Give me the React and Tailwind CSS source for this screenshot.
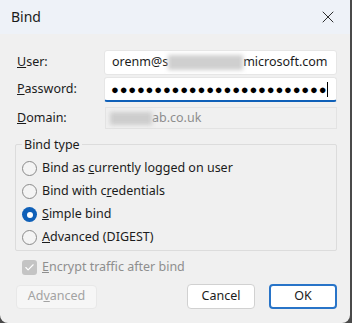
import { X, Check } from "lucide-react";

const font = { fontFamily: '"Noto Sans", "Open Sans", sans-serif' };

function Radio({ checked, children }) {
  return (
    <div className="flex items-center h-[23px]">
      {checked ? (
        <span className="w-[15px] h-[15px] rounded-full bg-[#0f60b8] flex items-center justify-center">
          <span className="w-[6px] h-[6px] rounded-full bg-white" />
        </span>
      ) : (
        <span className="w-[15px] h-[15px] rounded-full border border-[#8a8a8a] bg-[#f4f4f4]" />
      )}
      <span className="ml-[5px] text-[#1b1b1b]">{children}</span>
    </div>
  );
}

export default function App() {
  return (
    <div className="w-[352px] h-[323px] bg-[#4a4a4a] text-[12.5px] leading-none" style={font}>
      <div className="w-[350px] h-[323px] bg-[#f0f0f0] rounded-b-[8px] overflow-hidden flex flex-col">
        <div className="h-[34px] bg-[#eef2f8] flex items-center justify-between pl-[11px] pr-[12px]">
          <span className="text-[14px] text-[#1b1b1b]">Bind</span>
          <X size={20} strokeWidth={1.1} className="text-[#1b1b1b]" />
        </div>

        <div className="flex flex-col pl-[17px] pr-[13px] pt-[16px]">
          <div className="flex items-center h-[25px]">
            <span className="w-[87px] text-[#1b1b1b]"><u>U</u>ser:</span>
            <div className="flex-1 h-[25px] bg-white border border-[#e6e6e6] rounded-[3px] flex items-center pl-[7px] text-[#1b1b1b]">
              orenm@s
              <span className="inline-block w-[75px] h-[15px] bg-[#cfcfcf] blur-[2px]" />
              microsoft.com
            </div>
          </div>

          <div className="flex items-center h-[25px] mt-[2px]">
            <span className="w-[87px] text-[#1b1b1b]"><u>P</u>assword:</span>
            <div className="flex-1 h-[25px] bg-white border border-[#e6e6e6] border-b-2 border-b-[#0f60b8] rounded-[3px] flex items-center pl-[6px] overflow-hidden">
              <span className="text-[13px] tracking-[0.8px] text-black whitespace-nowrap">●●●●●●●●●●●●●●●●●●●●●●●●●</span>
              <span className="w-px h-[15px] bg-black shrink-0" />
            </div>
          </div>

          <div className="flex items-center h-[22px] mt-[5px]">
            <span className="w-[88px] text-[#1b1b1b]"><u>D</u>omain:</span>
            <div className="flex-1 h-[22px] border border-[#e3e3e3] flex items-center pl-[4px] text-[#8d8d8d]">
              <span className="inline-block w-[42px] h-[13px] bg-[#cdcdcd] blur-[2px]" />
              ab.co.uk
            </div>
          </div>

          <div className="relative mt-[15px] ml-[-2px] h-[107px] border border-[#dcdcdc] rounded-[2px] pl-[6px] pt-[12px]">
            <span className="absolute left-[6px] top-[-6px] bg-[#f0f0f0] px-[2px] text-[#1b1b1b]">Bind type</span>
            <Radio>Bind as <u>c</u>urrently logged on user</Radio>
            <Radio>Bind with c<u>r</u>edentials</Radio>
            <Radio checked><u>S</u>imple bind</Radio>
            <Radio><u>A</u>dvanced (DIGEST)</Radio>
          </div>

          <div className="flex items-center mt-[8px] ml-[5px] h-[16px]">
            <span className="w-[15px] h-[15px] rounded-[3px] bg-[#c4c4c4] flex items-center justify-center">
              <Check size={11} strokeWidth={2.5} className="text-white" />
            </span>
            <span className="ml-[5px] text-[#8e8e8e]"><u>E</u>ncrypt traffic after bind</span>
          </div>

          <div className="flex items-center mt-[9px] ml-[-1px]">
            <div className="w-[81px] h-[24px] rounded-[4px] border border-[#e8e8e8] bg-[#f6f6f6] flex items-center justify-center text-[#a3a3a3]">
              Ad<u>v</u>anced
            </div>
            <div className="ml-auto w-[68px] h-[25px] rounded-[4px] border border-[#d1d1d1] bg-white flex items-center justify-center text-[#1b1b1b]">
              Cancel
            </div>
            <div className="ml-[14px] w-[68px] h-[25px] rounded-[4px] border-2 border-[#2874c8] bg-white flex items-center justify-center text-[#1b1b1b]">
              OK
            </div>
          </div>
        </div>
      </div>
    </div>
  );
}
